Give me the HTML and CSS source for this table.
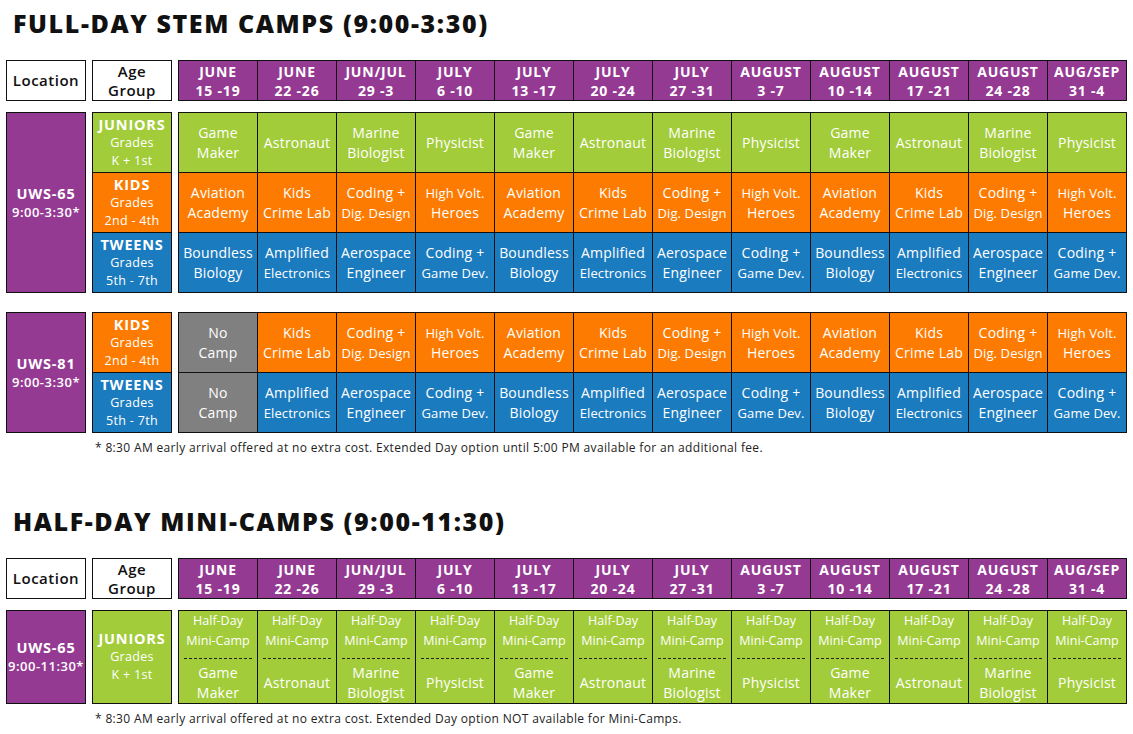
FILE: index.html
```html
<!DOCTYPE html>
<html>
<head>
<meta charset="utf-8">
<link rel="stylesheet" href="styles.css">
</head>
<body>
<div class="page">
  <h1 class="title">FULL-DAY STEM CAMPS (9:00-3:30)</h1>

  <div class="row head-row">
    <div class="hbox"><span>Location</span></div>
    <div class="hbox"><span>Age</span><span>Group</span></div>
    <div class="sched dates">
      <div class="c p"><b>JUNE</b><b>15 -19</b></div>
      <div class="c p"><b>JUNE</b><b>22 -26</b></div>
      <div class="c p"><b>JUN/JUL</b><b>29 -3</b></div>
      <div class="c p"><b>JULY</b><b>6 -10</b></div>
      <div class="c p"><b>JULY</b><b>13 -17</b></div>
      <div class="c p"><b>JULY</b><b>20 -24</b></div>
      <div class="c p"><b>JULY</b><b>27 -31</b></div>
      <div class="c p"><b>AUGUST</b><b>3 -7</b></div>
      <div class="c p"><b>AUGUST</b><b>10 -14</b></div>
      <div class="c p"><b>AUGUST</b><b>17 -21</b></div>
      <div class="c p"><b>AUGUST</b><b>24 -28</b></div>
      <div class="c p"><b>AUG/SEP</b><b>31 -4</b></div>
    </div>
  </div>

  <div class="row grp grp3">
    <div class="loc"><b>UWS-65</b><small>9:00-3:30*</small></div>
    <div class="ages">
      <div class="c g"><b>JUNIORS</b><small>Grades</small><small>K + 1st</small></div>
      <div class="c o"><b>KIDS</b><small>Grades</small><small>2nd - 4th</small></div>
      <div class="c bl"><b>TWEENS</b><small>Grades</small><small>5th - 7th</small></div>
    </div>
    <div class="sched body">
      <div class="c g"><span>Game</span><span>Maker</span></div>
      <div class="c g"><span>Astronaut</span></div>
      <div class="c g"><span>Marine</span><span>Biologist</span></div>
      <div class="c g"><span>Physicist</span></div>
      <div class="c g"><span>Game</span><span>Maker</span></div>
      <div class="c g"><span>Astronaut</span></div>
      <div class="c g"><span>Marine</span><span>Biologist</span></div>
      <div class="c g"><span>Physicist</span></div>
      <div class="c g"><span>Game</span><span>Maker</span></div>
      <div class="c g"><span>Astronaut</span></div>
      <div class="c g"><span>Marine</span><span>Biologist</span></div>
      <div class="c g"><span>Physicist</span></div>

      <div class="c o"><span>Aviation</span><span>Academy</span></div>
      <div class="c o"><span>Kids</span><span>Crime Lab</span></div>
      <div class="c o"><span>Coding +</span><small>Dig. Design</small></div>
      <div class="c o"><small>High Volt.</small><span>Heroes</span></div>
      <div class="c o"><span>Aviation</span><span>Academy</span></div>
      <div class="c o"><span>Kids</span><span>Crime Lab</span></div>
      <div class="c o"><span>Coding +</span><small>Dig. Design</small></div>
      <div class="c o"><small>High Volt.</small><span>Heroes</span></div>
      <div class="c o"><span>Aviation</span><span>Academy</span></div>
      <div class="c o"><span>Kids</span><span>Crime Lab</span></div>
      <div class="c o"><span>Coding +</span><small>Dig. Design</small></div>
      <div class="c o"><small>High Volt.</small><span>Heroes</span></div>

      <div class="c bl"><span>Boundless</span><span>Biology</span></div>
      <div class="c bl"><span>Amplified</span><small>Electronics</small></div>
      <div class="c bl"><span>Aerospace</span><span>Engineer</span></div>
      <div class="c bl"><span>Coding +</span><small>Game Dev.</small></div>
      <div class="c bl"><span>Boundless</span><span>Biology</span></div>
      <div class="c bl"><span>Amplified</span><small>Electronics</small></div>
      <div class="c bl"><span>Aerospace</span><span>Engineer</span></div>
      <div class="c bl"><span>Coding +</span><small>Game Dev.</small></div>
      <div class="c bl"><span>Boundless</span><span>Biology</span></div>
      <div class="c bl"><span>Amplified</span><small>Electronics</small></div>
      <div class="c bl"><span>Aerospace</span><span>Engineer</span></div>
      <div class="c bl"><span>Coding +</span><small>Game Dev.</small></div>
    </div>
  </div>

  <div class="row grp grp2">
    <div class="loc"><b>UWS-81</b><small>9:00-3:30*</small></div>
    <div class="ages">
      <div class="c o"><b>KIDS</b><small>Grades</small><small>2nd - 4th</small></div>
      <div class="c bl"><b>TWEENS</b><small>Grades</small><small>5th - 7th</small></div>
    </div>
    <div class="sched body">
      <div class="c gr"><span>No</span><span>Camp</span></div>
      <div class="c o"><span>Kids</span><span>Crime Lab</span></div>
      <div class="c o"><span>Coding +</span><small>Dig. Design</small></div>
      <div class="c o"><small>High Volt.</small><span>Heroes</span></div>
      <div class="c o"><span>Aviation</span><span>Academy</span></div>
      <div class="c o"><span>Kids</span><span>Crime Lab</span></div>
      <div class="c o"><span>Coding +</span><small>Dig. Design</small></div>
      <div class="c o"><small>High Volt.</small><span>Heroes</span></div>
      <div class="c o"><span>Aviation</span><span>Academy</span></div>
      <div class="c o"><span>Kids</span><span>Crime Lab</span></div>
      <div class="c o"><span>Coding +</span><small>Dig. Design</small></div>
      <div class="c o"><small>High Volt.</small><span>Heroes</span></div>

      <div class="c gr"><span>No</span><span>Camp</span></div>
      <div class="c bl"><span>Amplified</span><small>Electronics</small></div>
      <div class="c bl"><span>Aerospace</span><span>Engineer</span></div>
      <div class="c bl"><span>Coding +</span><small>Game Dev.</small></div>
      <div class="c bl"><span>Boundless</span><span>Biology</span></div>
      <div class="c bl"><span>Amplified</span><small>Electronics</small></div>
      <div class="c bl"><span>Aerospace</span><span>Engineer</span></div>
      <div class="c bl"><span>Coding +</span><small>Game Dev.</small></div>
      <div class="c bl"><span>Boundless</span><span>Biology</span></div>
      <div class="c bl"><span>Amplified</span><small>Electronics</small></div>
      <div class="c bl"><span>Aerospace</span><span>Engineer</span></div>
      <div class="c bl"><span>Coding +</span><small>Game Dev.</small></div>
    </div>
  </div>

  <p class="note">* 8:30 AM early arrival offered at no extra cost. Extended Day option until 5:00 PM available for an additional fee.</p>

  <h1 class="title title2">HALF-DAY MINI-CAMPS (9:00-11:30)</h1>

  <div class="row head-row">
    <div class="hbox"><span>Location</span></div>
    <div class="hbox"><span>Age</span><span>Group</span></div>
    <div class="sched dates">
      <div class="c p"><b>JUNE</b><b>15 -19</b></div>
      <div class="c p"><b>JUNE</b><b>22 -26</b></div>
      <div class="c p"><b>JUN/JUL</b><b>29 -3</b></div>
      <div class="c p"><b>JULY</b><b>6 -10</b></div>
      <div class="c p"><b>JULY</b><b>13 -17</b></div>
      <div class="c p"><b>JULY</b><b>20 -24</b></div>
      <div class="c p"><b>JULY</b><b>27 -31</b></div>
      <div class="c p"><b>AUGUST</b><b>3 -7</b></div>
      <div class="c p"><b>AUGUST</b><b>10 -14</b></div>
      <div class="c p"><b>AUGUST</b><b>17 -21</b></div>
      <div class="c p"><b>AUGUST</b><b>24 -28</b></div>
      <div class="c p"><b>AUG/SEP</b><b>31 -4</b></div>
    </div>
  </div>

  <div class="row grp grp-half">
    <div class="loc"><b>UWS-65</b><small>9:00-11:30*</small></div>
    <div class="ages">
      <div class="c g"><b>JUNIORS</b><small>Grades</small><small>K + 1st</small></div>
    </div>
    <div class="sched body">
      <div class="c g half"><div class="top"><small>Half-Day</small><small>Mini-Camp</small></div><div class="bot"><span>Game</span><span>Maker</span></div></div>
      <div class="c g half"><div class="top"><small>Half-Day</small><small>Mini-Camp</small></div><div class="bot"><span>Astronaut</span></div></div>
      <div class="c g half"><div class="top"><small>Half-Day</small><small>Mini-Camp</small></div><div class="bot"><span>Marine</span><span>Biologist</span></div></div>
      <div class="c g half"><div class="top"><small>Half-Day</small><small>Mini-Camp</small></div><div class="bot"><span>Physicist</span></div></div>
      <div class="c g half"><div class="top"><small>Half-Day</small><small>Mini-Camp</small></div><div class="bot"><span>Game</span><span>Maker</span></div></div>
      <div class="c g half"><div class="top"><small>Half-Day</small><small>Mini-Camp</small></div><div class="bot"><span>Astronaut</span></div></div>
      <div class="c g half"><div class="top"><small>Half-Day</small><small>Mini-Camp</small></div><div class="bot"><span>Marine</span><span>Biologist</span></div></div>
      <div class="c g half"><div class="top"><small>Half-Day</small><small>Mini-Camp</small></div><div class="bot"><span>Physicist</span></div></div>
      <div class="c g half"><div class="top"><small>Half-Day</small><small>Mini-Camp</small></div><div class="bot"><span>Game</span><span>Maker</span></div></div>
      <div class="c g half"><div class="top"><small>Half-Day</small><small>Mini-Camp</small></div><div class="bot"><span>Astronaut</span></div></div>
      <div class="c g half"><div class="top"><small>Half-Day</small><small>Mini-Camp</small></div><div class="bot"><span>Marine</span><span>Biologist</span></div></div>
      <div class="c g half"><div class="top"><small>Half-Day</small><small>Mini-Camp</small></div><div class="bot"><span>Physicist</span></div></div>
    </div>
  </div>

  <p class="note">* 8:30 AM early arrival offered at no extra cost. Extended Day option NOT available for Mini-Camps.</p>
</div>
</body>
</html>
```

FILE: styles.css
```css
html, body {
  margin: 0;
  padding: 0;
  background: #fff;
}
.page {
  padding-left: 6px;
  font-family: "Open Sans", "Liberation Sans", sans-serif;
  color: #111;
}
.title {
  margin: 0 0 14px 7px;
  height: 46px;
  line-height: 46px;
  font-size: 25px;
  font-weight: 800;
  letter-spacing: 1.6px;
  color: #111;
}
.title2 {
  margin-top: 42px;
}
.row {
  display: flex;
  gap: 6px;
  width: 1121px;
}
.head-row {
  height: 41px;
  margin-bottom: 11px;
}
.hbox {
  box-sizing: border-box;
  width: 80px;
  border: 1px solid #111;
  background: #fff;
  display: flex;
  flex-direction: column;
  justify-content: center;
  align-items: center;
  font-size: 15px;
  font-weight: 600;
  line-height: 19px;
  letter-spacing: 0.5px;
  color: #111;
}
.sched {
  box-sizing: border-box;
  width: 949px;
  display: grid;
  grid-template-columns: repeat(12, 1fr);
  gap: 1px;
  padding: 1px;
  background: #111;
}
.dates {
  grid-template-rows: 39px;
}
.grp3 { height: 181px; }
.grp2 { height: 121px; margin-top: 19px; }
.grp-half { height: 94px; }
.body { grid-auto-rows: 1fr; }
.loc {
  box-sizing: border-box;
  width: 80px;
  border: 1px solid #111;
  background: #953a93;
  color: #fff;
  display: flex;
  flex-direction: column;
  justify-content: center;
  align-items: center;
}
.loc b { font-size: 14.5px; line-height: 19px; letter-spacing: 0.8px; }
.loc small { font-size: 13px; line-height: 19px; font-weight: 600; letter-spacing: 0.5px; }
.ages {
  box-sizing: border-box;
  width: 80px;
  display: grid;
  grid-auto-rows: 1fr;
  gap: 1px;
  padding: 1px;
  background: #111;
}
.ages .c b { font-size: 14.5px; line-height: 18px; letter-spacing: 0.8px; }
.ages .c small { font-size: 12.5px; line-height: 18px; font-weight: 500; letter-spacing: 0.3px; }
.c {
  display: flex;
  flex-direction: column;
  justify-content: center;
  align-items: center;
  text-align: center;
  color: #fff;
  white-space: nowrap;
  overflow: hidden;
}
.c span { font-size: 14px; line-height: 20px; font-weight: 500; letter-spacing: 0.2px; }
.c small { font-size: 13px; line-height: 20px; font-weight: 500; letter-spacing: 0.1px; }
.c b { font-size: 14px; line-height: 19px; font-weight: 700; letter-spacing: 0.8px; }
.p { background: #953a93; }
.g { background: #a2cc3a; }
.o { background: #fd7b00; }
.bl { background: #1b7bbf; }
.gr { background: #808080; }
.half {
  justify-content: flex-start;
  align-items: stretch;
}
.half .top {
  display: flex;
  flex-direction: column;
  align-items: center;
  padding-bottom: 7px;
  margin: 0 5px;
  border-bottom: 1px dashed #222;
}
.half .top small { font-size: 12.5px; line-height: 20px; letter-spacing: 0; }
.half .bot {
  flex: 1;
  display: flex;
  flex-direction: column;
  justify-content: center;
  align-items: center;
  padding-top: 4px;
}
.note {
  margin: 7px 0 0 89px;
  font-size: 12px;
  line-height: 16px;
  letter-spacing: 0.34px;
  color: #222;
}
```
